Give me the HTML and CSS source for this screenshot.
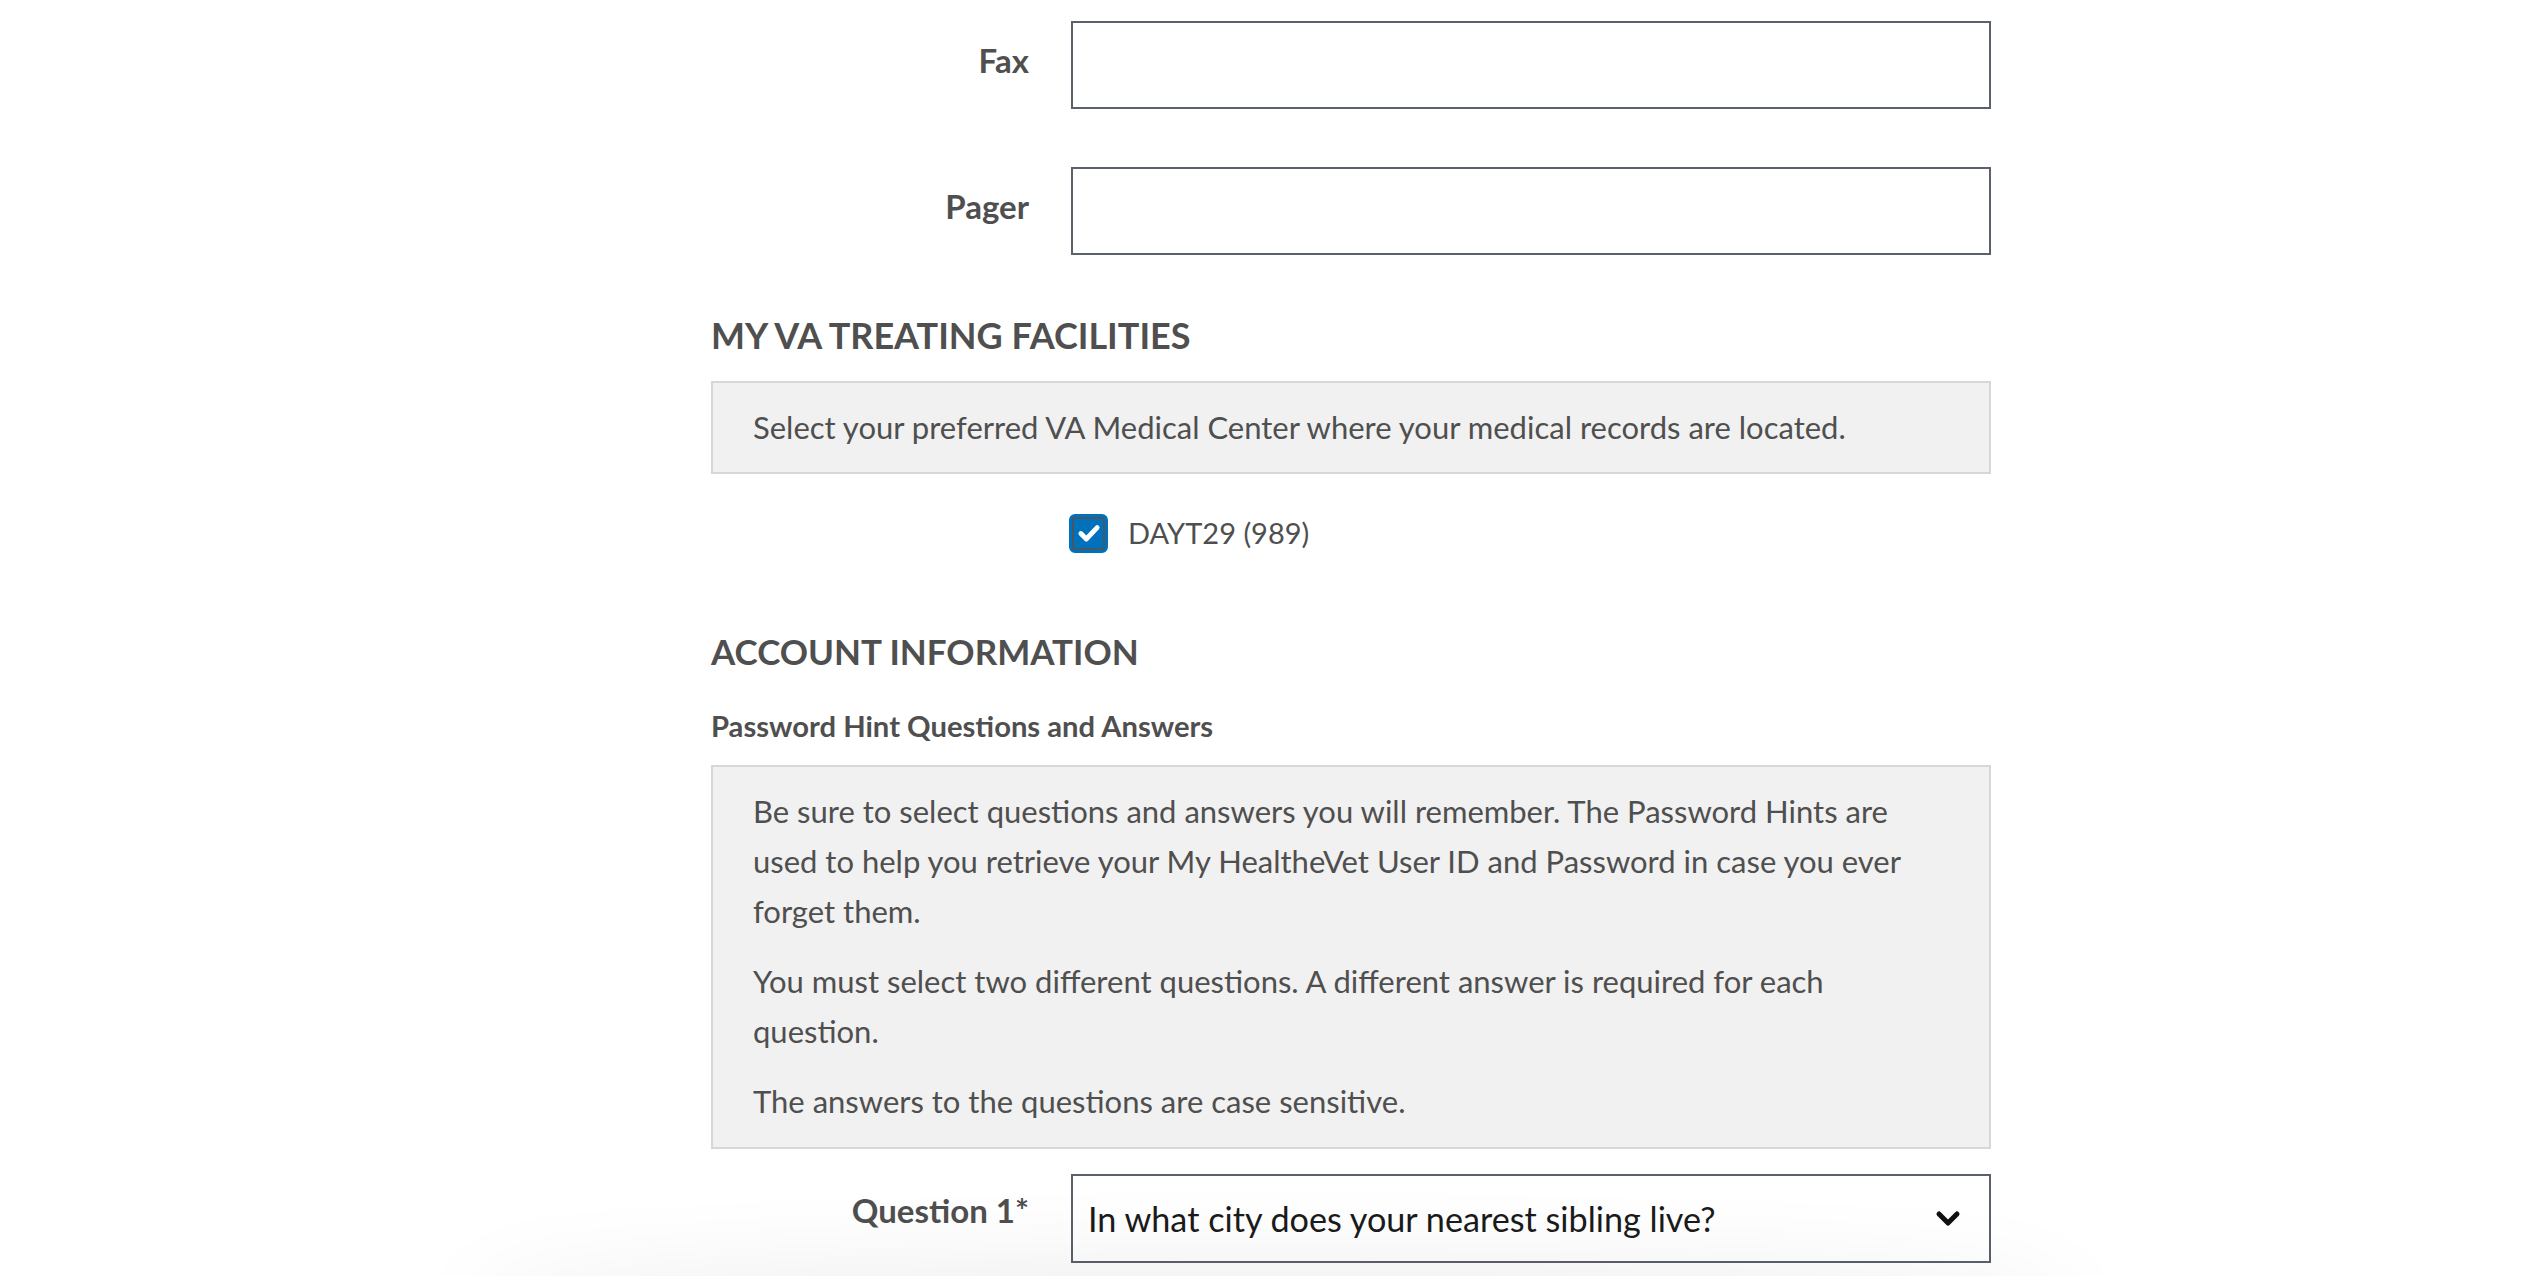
FILE: index.html
```html
<!DOCTYPE html>
<html lang="en">
<head>
<meta charset="utf-8">
<title>Profile</title>
<link rel="stylesheet" href="styles.css">
</head>
<body>
<main class="form">
  <div class="row">
    <label class="label" for="fax">Fax</label>
    <input class="field" id="fax" type="text">
  </div>
  <div class="row row-pager">
    <label class="label" for="pager">Pager</label>
    <input class="field" id="pager" type="text">
  </div>

  <h2 class="section-title">MY VA TREATING FACILITIES</h2>
  <div class="note note-single">
    <p>Select your preferred VA Medical Center where your medical records are located.</p>
  </div>
  <div class="check-row">
    <span class="checkbox">
      <svg viewBox="0 0 24 24" width="26" height="26"><path d="M4.5 12.5l5 5 10-10.5" fill="none" stroke="#fff" stroke-width="4.5" stroke-linecap="round" stroke-linejoin="round"/></svg>
    </span>
    <span class="check-label">DAYT29 (989)</span>
  </div>

  <h2 class="section-title section-account">ACCOUNT INFORMATION</h2>
  <h3 class="subtitle">Password Hint Questions and Answers</h3>
  <div class="note note-multi">
    <p>Be sure to select questions and answers you will remember. The Password Hints are used to help you retrieve your My HealtheVet User ID and Password in case you ever forget them.</p>
    <p>You must select two different questions. A different answer is required for each question.</p>
    <p>The answers to the questions are case sensitive.</p>
  </div>
  <div class="row row-question">
    <label class="label label-question" for="q1">Question 1*</label>
    <div class="select">
      <span class="select-text">In what city does your nearest sibling live?</span>
      <svg class="chevron" viewBox="0 0 26 18" width="26" height="18"><path d="M4 4l9 9 9-9" fill="none" stroke="#111" stroke-width="5" stroke-linecap="round" stroke-linejoin="round"/></svg>
    </div>
  </div>
</main>
<div class="bottom-shade"></div>
</body>
</html>
```

FILE: styles.css
```css
html, body {
  margin: 0;
  padding: 0;
  background: #ffffff;
  overflow: hidden;
}
body {
  font-family: "Source Sans Pro", Lato, "Noto Sans", sans-serif;
  color: #4f4f4f;
  height: 1276px;
}
.form {
  width: 1280px;
  margin-left: 711px;
  padding-top: 21px;
}
.row {
  display: flex;
  align-items: center;
}
.row-pager {
  margin-top: 58px;
}
.label {
  width: 360px;
  box-sizing: border-box;
  padding-right: 42px;
  text-align: right;
  font-weight: 700;
  font-size: 33px;
  color: #4f4f4f;
  position: relative;
  top: -5px;
}
.label-question {
  top: -9px;
}
.field {
  width: 920px;
  height: 88px;
  box-sizing: border-box;
  border: 2px solid #5b616b;
  border-radius: 0;
  margin: 0;
  background: #fff;
  font-size: 31px;
}
.section-title {
  margin: 56px 0 0;
  font-size: 36px;
  line-height: 48px;
  font-weight: 700;
  color: #4f4f4f;
}
.section-account {
  margin-top: 74px;
  font-size: 35px;
}
.note {
  background: #f1f1f1;
  border: 2px solid #d6d7d9;
  box-sizing: border-box;
  padding: 19px 40px 21px;
  font-size: 31px;
  line-height: 50px;
  color: #4f4f4f;
}
.note p {
  margin: 0;
}
.note p + p {
  margin-top: 20px;
}
.note-single {
  margin-top: 22px;
  padding-bottom: 20px;
}
.check-row {
  display: flex;
  align-items: center;
  margin-top: 39px;
  margin-left: 358px;
}
.checkbox {
  width: 39px;
  height: 39px;
  box-sizing: border-box;
  border-radius: 6px;
  background: #0071bb;
  border: 3px solid #0071bb;
  box-shadow: inset 0 0 0 2px #4a5763;
  display: flex;
  align-items: center;
  justify-content: center;
}
.check-label {
  margin-left: 20px;
  font-size: 29px;
  line-height: 40px;
  color: #4f4f4f;
}
.subtitle {
  margin: 33px 0 0;
  font-size: 29.2px;
  line-height: 36px;
  font-weight: 700;
  color: #4f4f4f;
}
.note-multi {
  margin-top: 21px;
}
.row-question {
  margin-top: 25px;
}
.select {
  width: 920px;
  height: 89px;
  box-sizing: border-box;
  border: 2px solid #5b616b;
  display: flex;
  align-items: center;
  justify-content: space-between;
  padding: 0 28px 0 15px;
  background: #fff;
}
.select-text {
  font-size: 34.2px;
  color: #1b1b1b;
}
.chevron {
  display: block;
}
.bottom-shade {
  position: fixed;
  left: 470px;
  width: 1605px;
  bottom: -60px;
  height: 60px;
  box-shadow: 0 0 90px 10px rgba(0, 0, 0, 0.08);
  border-radius: 50%;
}
```
